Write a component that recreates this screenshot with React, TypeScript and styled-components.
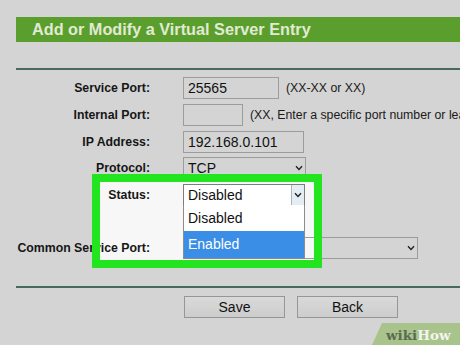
import React from 'react'
import styled, { createGlobalStyle } from 'styled-components'

const GlobalStyle = createGlobalStyle`
  html, body {
    margin: 0;
    padding: 0;
    background: #d4d4d4;
  }
  body {
    font-family: 'Liberation Sans', Arial, sans-serif;
    color: #161616;
  }
`

const Chevron = () => (
  <svg width="8" height="6" viewBox="0 0 8 6">
    <polyline points="1,1.2 4,4.4 7,1.2" fill="none" stroke="#222" strokeWidth="1.4" />
  </svg>
)

const App = () => {
  return (
    <Page>
      <GlobalStyle />
      <Header>Add or Modify a Virtual Server Entry</Header>
      <Rule $top={26} />
      <Form>
        <Label>Service Port:</Label>
        <Field>
          <Box $width={96}>25565</Box>
          <Hint>(XX-XX or XX)</Hint>
        </Field>

        <Label>Internal Port:</Label>
        <Field>
          <Box $width={60} />
          <Hint>(XX, Enter a specific port number or leave it blank)</Hint>
        </Field>

        <Label>IP Address:</Label>
        <Field>
          <Box $width={121}>192.168.0.101</Box>
        </Field>

        <Label>Protocol:</Label>
        <Field>
          <Select $width={123}>
            <span>TCP</span>
            <Arrow>
              <Chevron />
            </Arrow>
          </Select>
        </Field>

        <Label>Status:</Label>
        <Field>
          <Select $width={122} $open>
            <span>Disabled</span>
            <Arrow $button>
              <Chevron />
            </Arrow>
            <Dropdown>
              <Option>Disabled</Option>
              <Option $active>Enabled</Option>
            </Dropdown>
          </Select>
        </Field>

        <Blank />

        <Label>Common Service Port:</Label>
        <Field>
          <Select $width={235}>
            <span />
            <Arrow>
              <Chevron />
            </Arrow>
          </Select>
        </Field>
      </Form>
      <Rule $top={25} />
      <Buttons>
        <Button>Save</Button>
        <Button>Back</Button>
      </Buttons>

      <HighlightFill />
      <HighlightFrame />

      <Watermark>
        <Wiki>wiki</Wiki>
        <How>How</How>
      </Watermark>
    </Page>
  )
}

const Page = styled.div`
  position: relative;
  width: 460px;
  height: 345px;
  overflow: hidden;
  box-sizing: border-box;
  padding: 17px 0 0 16px;
  background: #d4d4d4;
`
const Header = styled.div`
  height: 25px;
  line-height: 25px;
  padding-left: 16px;
  background: #5a9e2d;
  color: #e1ead3;
  font-size: 16.25px;
  font-weight: bold;
  white-space: nowrap;
`
const Rule = styled.div<{ $top: number }>`
  margin-top: ${(p) => p.$top}px;
  height: 2px;
  background: #466a5c;
`
const Form = styled.div`
  position: relative;
  z-index: 1;
  display: grid;
  grid-template-columns: 134px 1fr;
  grid-auto-rows: 26.6px;
  column-gap: 33px;
  margin-top: 5.2px;
`
const Label = styled.div`
  display: flex;
  align-items: center;
  justify-content: flex-end;
  font-size: 12.3px;
  font-weight: bold;
  white-space: nowrap;
`
const Field = styled.div`
  display: flex;
  align-items: center;
  gap: 7px;
  min-width: 0;
  white-space: nowrap;
`
const Blank = styled.div`
  grid-column: 1 / -1;
`
const Box = styled.div<{ $width: number }>`
  box-sizing: border-box;
  width: ${(p) => p.$width}px;
  height: 22px;
  flex: none;
  display: flex;
  align-items: center;
  padding-left: 4px;
  border: 1px solid #9c9c9c;
  background: transparent;
  font-size: 14px;
  color: #111;
`
const Hint = styled.span`
  font-size: 12.3px;
  color: #1a1a1a;
`
const Select = styled.div<{ $width: number; $open?: boolean }>`
  position: relative;
  box-sizing: border-box;
  width: ${(p) => p.$width}px;
  height: 22px;
  flex: none;
  display: flex;
  align-items: center;
  justify-content: space-between;
  padding-left: 4px;
  border: 1px solid ${(p) => (p.$open ? '#7d7d7d' : '#9c9c9c')};
  background: ${(p) => (p.$open ? '#ffffff' : 'transparent')};
  font-size: 14px;
  color: #111;
`
const Arrow = styled.div<{ $button?: boolean }>`
  align-self: stretch;
  width: 12px;
  display: flex;
  align-items: center;
  justify-content: center;
  border-left: ${(p) => (p.$button ? '1px solid #a9b4bf' : 'none')};
  background: ${(p) => (p.$button ? '#e4ecf4' : 'transparent')};
`
const Dropdown = styled.div`
  position: absolute;
  z-index: 5;
  top: 100%;
  left: -1px;
  width: 122px;
  box-sizing: border-box;
  border: 1px solid #8c8c8c;
  border-top: none;
  background: #fff;
`
const Option = styled.div<{ $active?: boolean }>`
  height: ${(p) => (p.$active ? 27 : 26)}px;
  display: flex;
  align-items: center;
  padding-left: 4px;
  font-size: 14px;
  background: ${(p) => (p.$active ? '#3a8ee5' : '#fff')};
  color: ${(p) => (p.$active ? '#fff' : '#111')};
`
const Buttons = styled.div`
  display: flex;
  gap: 12px;
  margin: 8px 0 0 168px;
`
const Button = styled.div`
  box-sizing: border-box;
  width: 101px;
  height: 22px;
  display: flex;
  align-items: center;
  justify-content: center;
  border: 1px solid #969696;
  background: linear-gradient(#d9d9d9, #cdcdcd);
  font-size: 14px;
  color: #111;
`
const HighlightFill = styled.div`
  position: absolute;
  z-index: 0;
  left: 92px;
  top: 174px;
  width: 230px;
  height: 94px;
  background: #f7f7f7;
`
const HighlightFrame = styled.div`
  position: absolute;
  z-index: 2;
  left: 92px;
  top: 174px;
  width: 230px;
  height: 94px;
  box-sizing: border-box;
  border: 8px solid #22e41f;
  pointer-events: none;
`
const Watermark = styled.div`
  position: absolute;
  z-index: 3;
  left: 372px;
  top: 323px;
  right: 0;
  bottom: 0;
  display: flex;
  align-items: center;
  padding-left: 14px;
  background: #a8c38c;
  clip-path: polygon(10px 0, 100% 0, 100% 100%, 0 100%);
  font-family: 'DejaVu Serif', serif;
  font-weight: bold;
  font-size: 13.5px;
  padding-top: 2px;
`
const Wiki = styled.span`
  color: #5b6b52;
`
const How = styled.span`
  color: #f2f5ee;
`

export default App
